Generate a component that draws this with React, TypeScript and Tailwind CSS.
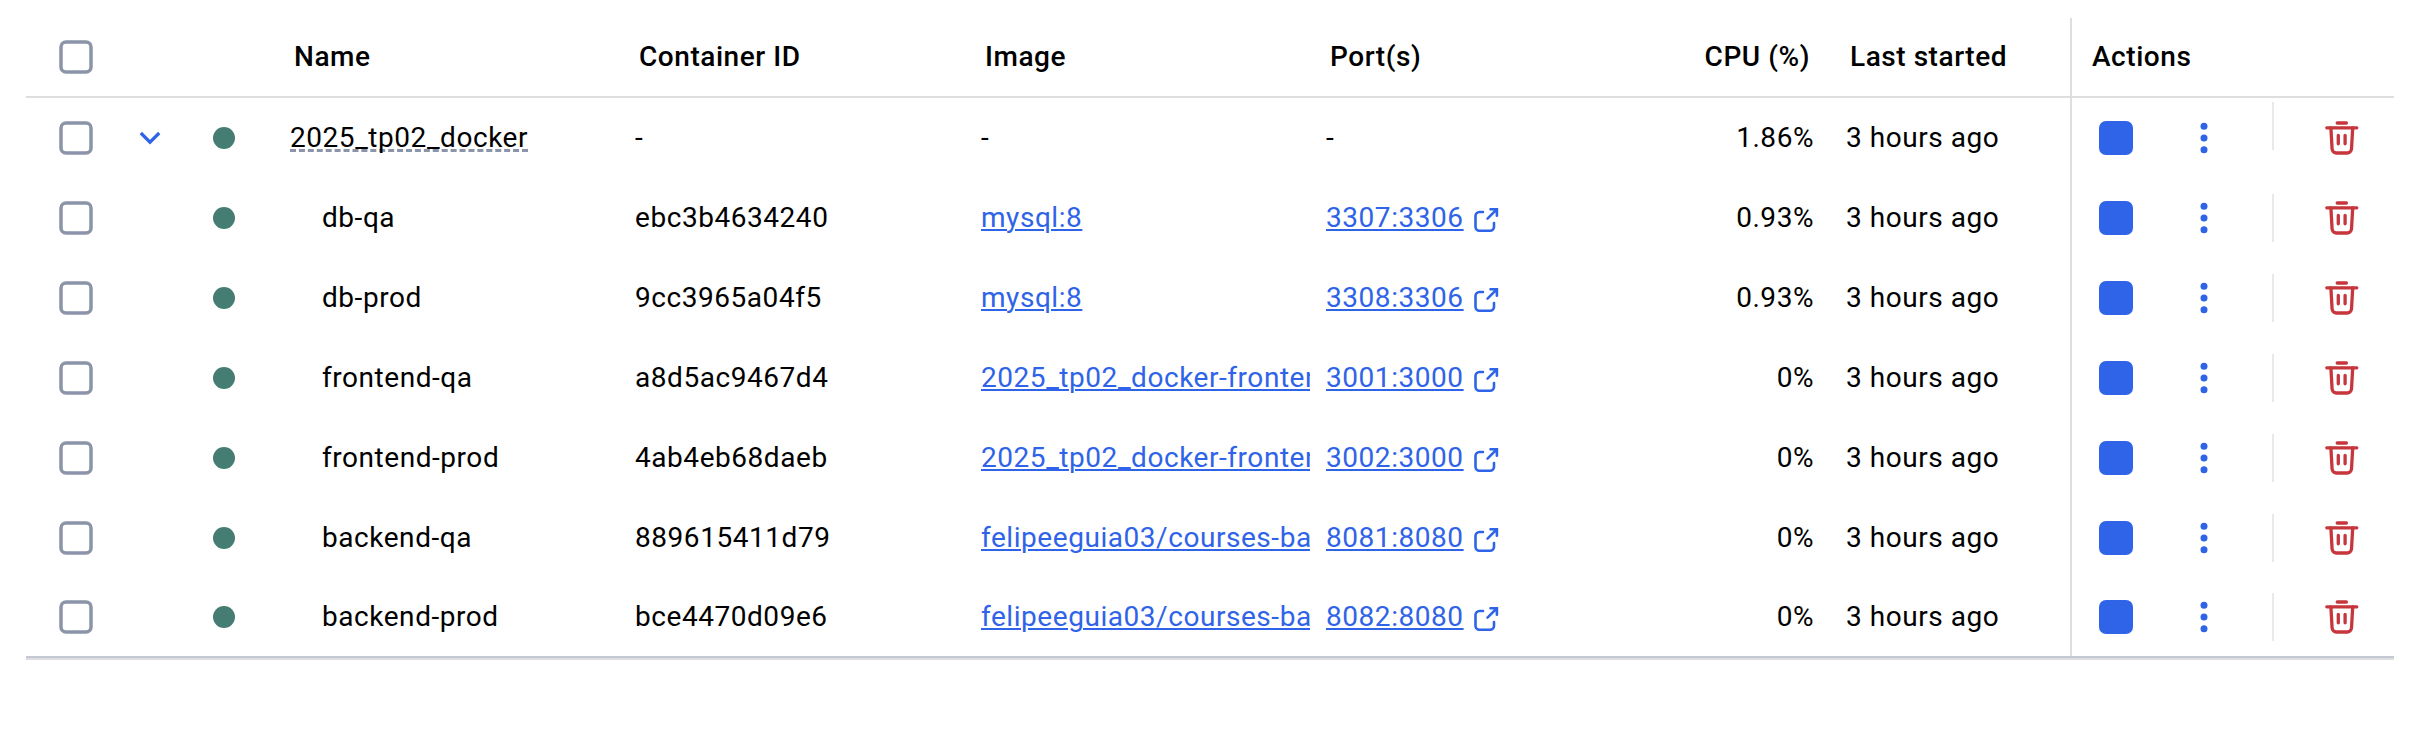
import React from "react";

type Row = {
  name: string;
  id: string;
  image: string;
  port: string;
  cpu: string;
  group?: boolean;
};

const rows: Row[] = [
  { name: "2025_tp02_docker", id: "-", image: "-", port: "-", cpu: "1.86%", group: true },
  { name: "db-qa", id: "ebc3b4634240", image: "mysql:8", port: "3307:3306", cpu: "0.93%" },
  { name: "db-prod", id: "9cc3965a04f5", image: "mysql:8", port: "3308:3306", cpu: "0.93%" },
  { name: "frontend-qa", id: "a8d5ac9467d4", image: "2025_tp02_docker-fronten", port: "3001:3000", cpu: "0%" },
  { name: "frontend-prod", id: "4ab4eb68daeb", image: "2025_tp02_docker-fronten", port: "3002:3000", cpu: "0%" },
  { name: "backend-qa", id: "889615411d79", image: "felipeeguia03/courses-bac", port: "8081:8080", cpu: "0%" },
  { name: "backend-prod", id: "bce4470d09e6", image: "felipeeguia03/courses-bac", port: "8082:8080", cpu: "0%" },
];

const columns =
  "grid grid-cols-[33px_81px_67px_83px_345px_346px_345px_346px_142px_256px_324px] items-center";

function Checkbox() {
  return (
    <svg className="size-[34px]" viewBox="0 0 34 34" fill="none" stroke="#8b94a8" strokeWidth="3.5">
      <rect x="2" y="2" width="30" height="30" rx="5" />
    </svg>
  );
}

function ExternalIcon() {
  return (
    <svg className="mt-1 size-[26px]" viewBox="0 0 26 26" fill="none" stroke="#2f63e8" strokeWidth="2.6" strokeLinecap="round">
      <path d="M10 5H6.500a4 4 0 0 0-4 4V19.700a4 4 0 0 0 4 4H17a4 4 0 0 0 4-4V16" />
      <path d="M17.500 2.300h6.400v6.400M23.500 2.700L14.500 11.700" />
    </svg>
  );
}

function TrashIcon() {
  return (
    <svg className="size-[34px]" viewBox="0 0 34 34" fill="none" stroke="#c6363c" strokeWidth="3.300" strokeLinecap="round" strokeLinejoin="round">
      <path d="M12.200 2h9.200" />
      <path d="M1.800 6.800h30" />
      <path d="M5.900 7l1.200 21a4.300 4.300 0 0 0 4.300 4h10.800a4.300 4.300 0 0 0 4.300-4L27.700 7" />
      <path d="M13.300 14.300v8.500M20.100 14.300v8.500" />
    </svg>
  );
}

function Link({ children }: { children: string }) {
  return (
    <a className="text-[#2f63e8] underline decoration-2 underline-offset-2">{children}</a>
  );
}

function TableRow({ row, last }: { row: Row; last: boolean }) {
  return (
    <div className={`${columns} ${last ? "h-[78px]" : "h-[80px]"}`}>
      <span />
      <Checkbox />
      <span>
        {row.group && (
          <svg className="ml-[-1px] size-[22px]" viewBox="0 0 22 22" fill="none" stroke="#2f63e8" strokeWidth="3.2">
            <path d="M1.800 6l9.200 9.200L20.200 6" />
          </svg>
        )}
      </span>
      <span className="ml-[6px] size-[22px] rounded-full bg-[#467d73]" />
      {row.group ? (
        <span className="underline decoration-[#8b94a8] decoration-dashed decoration-[3px] underline-offset-2 [text-decoration-skip-ink:none]">
          {row.name}
        </span>
      ) : (
        <span className="pl-8">{row.name}</span>
      )}
      <span>{row.id}</span>
      <span className="w-[329px] overflow-hidden whitespace-nowrap">
        {row.group ? row.image : <Link>{row.image}</Link>}
      </span>
      <span className="flex items-center gap-[9.500px]">
        {row.group ? row.port : <><Link>{row.port}</Link><ExternalIcon /></>}
      </span>
      <span className="text-right">{row.cpu}</span>
      <span className="pl-8">3 hours ago</span>
      <div className="flex h-full items-center border-l-2 border-[#dedede]">
        <span className="ml-[27px] size-[34px] rounded-[7px] bg-[#2f63e8]" />
        <svg className="ml-[67px] h-[34px] w-[8px]" viewBox="0 0 8 34" fill="#2f63e8">
          <circle cx="4" cy="5.300" r="3.500" />
          <circle cx="4" cy="17" r="3.500" />
          <circle cx="4" cy="28.700" r="3.500" />
        </svg>
        <span className={`ml-[64px] h-[48px] w-[2px] bg-[#e9e9e9] ${row.group ? "mb-[24px]" : ""}`} />
        <span className="ml-[51px] flex">
          <TrashIcon />
        </span>
      </div>
    </div>
  );
}

export default function App() {
  return (
    <div className="h-[742px] w-[2432px] overflow-hidden bg-white pt-[18px] pl-[26px] font-[Roboto,sans-serif] text-[28px] leading-[40px] tracking-[0.55px] text-black">
      <div className="w-[2368px] border-b-2 border-[#dedede]">
        <div className="border-b-2 border-[#c3c8d4]">
          <div className={`${columns} h-[80px] border-b-2 border-[#dedede] font-medium`}>
            <span />
            <Checkbox />
            <span />
            <span />
            <span className="pl-1">Name</span>
            <span className="pl-1">Container ID</span>
            <span className="pl-1">Image</span>
            <span className="pl-1">Port(s)</span>
            <span className="pr-1 text-right">CPU (%)</span>
            <span className="pl-9">Last started</span>
            <span className="flex h-[78px] items-center border-l-2 border-[#dedede] pl-5">Actions</span>
          </div>
          {rows.map((row, i) => (
            <TableRow key={row.name} row={row} last={i === rows.length - 1} />
          ))}
        </div>
      </div>
    </div>
  );
}
